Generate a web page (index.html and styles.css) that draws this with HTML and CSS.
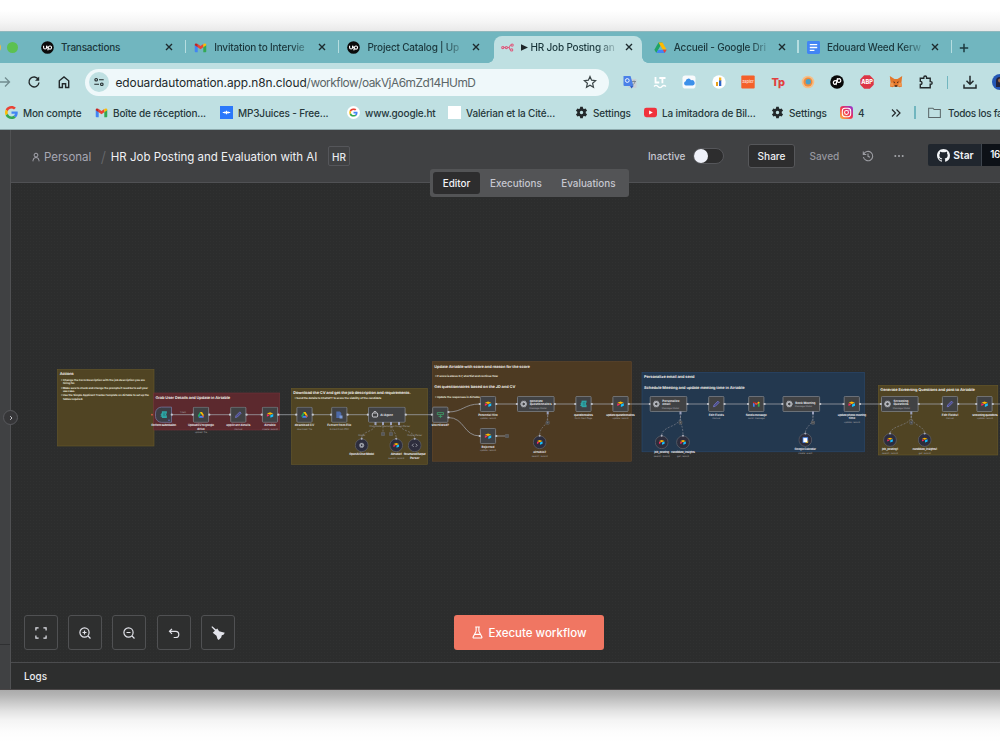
FILE: index.html
```html
<!DOCTYPE html>
<html lang="en">
<head>
    <meta charset="UTF-8">
    <meta name="viewport" content="width=device-width, initial-scale=1.0">
    <title>HR Job Posting and Evaluation with AI</title>
    <link rel="stylesheet" href="styles.css">
</head>
<body>
    <!-- Shared icons -->
    <svg class="sprite" width="0" height="0">
        <symbol id="up" viewBox="0 0 14 14">
            <circle cx="7" cy="7" r="6.8" fill="#0b0b0b"/>
            <path d="M2.8 5v2a1.6 1.6 0 0 0 3.2 0V5c.6 1.7 1.3 2.6 2 3.2M7.3 10.2 8 6.7a1.7 1.7 0 1 1 1.6 2.1c-1 0-1.7-.6-2.3-1.5" fill="none" stroke="#fff" stroke-width="1.2"/>
        </symbol>
        <symbol id="gmail" viewBox="0 0 14 14">
            <path d="M.8 4v7.200c0 .4.300.800.800.800H4V6z" fill="#4285f4"/>
            <path d="M13.200 4v7.200c0 .4-.3.800-.8.800H10V6z" fill="#34a853"/>
            <path d="M4 3.200 7 5.500l3-2.300v3.600L7 9 4 6.800z" fill="#ea4335"/>
            <path d="M10 3.200c1.300-1.100 3.200-.6 3.200.9v.4L10 6.800z" fill="#fbbc04"/>
            <path d="M4 3.200C2.700 2.100.8 2.600.8 4.100v.4L4 6.800z" fill="#c5221f"/>
        </symbol>
        <symbol id="google" viewBox="0 0 48 48">
            <path fill="#EA4335" d="M24 9.500c3.540 0 6.710 1.220 9.210 3.600l6.850-6.850C35.900 2.380 30.470 0 24 0 14.620 0 6.510 5.380 2.560 13.220l7.980 6.190C12.430 13.720 17.740 9.500 24 9.500z"/>
            <path fill="#4285F4" d="M46.980 24.550c0-1.570-.15-3.090-.38-4.550H24v9.020h12.940c-.58 2.960-2.260 5.480-4.780 7.180l7.730 6c4.510-4.180 7.090-10.360 7.090-17.650z"/>
            <path fill="#FBBC05" d="M10.530 28.590c-.48-1.450-.76-2.990-.76-4.590s.27-3.140.76-4.590l-7.980-6.190C.92 16.460 0 20.120 0 24s.92 7.540 2.560 10.780z"/>
            <path fill="#34A853" d="M24 48c6.480 0 11.930-2.130 15.890-5.810l-7.730-6c-2.150 1.450-4.920 2.300-8.160 2.300-6.260 0-11.570-4.220-13.470-9.910l-7.980 6.190C6.510 42.620 14.620 48 24 48z"/>
        </symbol>
        <symbol id="drive" viewBox="0 0 14 14">
            <path d="M4.900 1.500h4.200L4.700 9.200 2.500 13 .4 9.300z" fill="#1fa463"/>
            <path d="M4.900 1.500h4.200l4.500 7.800H9.400z" fill="#ffba00"/>
            <path d="M4.600 9.300h9L11.500 13h-9z" fill="#4285f4"/>
            <path d="m11.500 13-2.100-3.700h4.200z" fill="#ea4335"/>
            <path d="m7 5.600 2.200 3.700H4.800z" fill="currentColor"/>
        </symbol>
        <symbol id="gear" viewBox="0 0 24 24">
            <path fill="#23282a" fill-rule="evenodd" d="M19.800 13.200c.1-.8.1-1.600 0-2.400l2.500-1.900-2.600-4.400-2.900 1.200a8 8 0 0 0-2-1.200L14.400 1.500H9.600l-.4 3a8 8 0 0 0-2 1.200L4.300 4.500 1.700 8.900l2.500 1.900c-.1.8-.1 1.600 0 2.400l-2.500 1.900 2.600 4.400 2.900-1.200a8 8 0 0 0 2 1.200l.4 3h4.800l.4-3a8 8 0 0 0 2-1.200l2.900 1.200 2.600-4.400zM12 15.200a3.200 3.200 0 1 1 0-6.400 3.200 3.200 0 0 1 0 6.400z"/>
        </symbol>
        <symbol id="close" viewBox="0 0 8 8">
            <path d="m1 1 6 6M7 1 1 7" stroke="#1d2b2e" stroke-width="1.4" fill="none"/>
        </symbol>
        <symbol id="airtable" viewBox="0 0 12 12">
            <path d="M1 3.800 6 1.800l5 2-5 2z" fill="#fcb400"/>
            <path d="M6.500 6.600 11.200 4.800v4L6.500 10.600z" fill="#18bfff"/>
            <path d="M.8 4.800 5.500 6.700.8 9z" fill="#f82b60"/>
        </symbol>
        <symbol id="pencil" viewBox="0 0 12 12">
            <path d="m1.500 10.500.8-3 6.200-6.200 2.200 2.200-6.200 6.200z" fill="#4c4e8c" stroke="#8688e6" stroke-width=".9"/>
        </symbol>
        <symbol id="openai" viewBox="0 0 12 12">
            <g fill="none" stroke="#c9ccd3" stroke-width="1">
                <ellipse cx="6" cy="6" rx="4.800" ry="2.500"/>
                <ellipse cx="6" cy="6" rx="4.800" ry="2.500" transform="rotate(60 6 6)"/>
                <ellipse cx="6" cy="6" rx="4.800" ry="2.500" transform="rotate(120 6 6)"/>
            </g>
        </symbol>
        <symbol id="form" viewBox="0 0 12 12">
            <path d="M3 .5h8v3l-1 1v2.500h1v4H3V9H1V7.500h1v-1H1V5h1V3.500H3z" fill="#2fa5a5"/>
            <path d="M5 3.500h4M5 5.500h3M5 7.500h4" stroke="#1f6a70" stroke-width=".8"/>
        </symbol>
        <symbol id="node" viewBox="0 0 20 16">
            <rect x="2.400" y=".4" width="15.200" height="15.200" rx="1" fill="#414244" stroke="#81858b" stroke-width=".8"/>
            <circle cx="1.700" cy="8" r="1.100" fill="#c5c8d0"/>
            <circle cx="18.300" cy="8" r="1.100" fill="#c5c8d0"/>
        </symbol>
        <symbol id="wide" viewBox="0 0 41 16">
            <rect x="2.200" y=".4" width="36.600" height="15.200" rx="1" fill="#414244" stroke="#81858b" stroke-width=".8"/>
            <circle cx="1.500" cy="8" r="1.100" fill="#c5c8d0"/>
            <circle cx="39.500" cy="8" r="1.100" fill="#c5c8d0"/>
        </symbol>
        <symbol id="sub" viewBox="0 0 14 16">
            <circle cx="7" cy="8.700" r="6.400" fill="#2d2d3d" stroke="#6b6e75" stroke-width=".6"/>
            <path d="m7 .9 1.200 1.300L7 3.500 5.800 2.200z" fill="#a9acbb"/>
        </symbol>
        <symbol id="plus" viewBox="0 0 4 4">
            <rect x=".4" y=".4" width="3.200" height="3.200" rx=".5" fill="#38393b" stroke="#85878b" stroke-width=".5"/>
            <path d="M2 1.200v1.600M1.200 2h1.600" stroke="#a0a2a6" stroke-width=".4"/>
        </symbol>
    </svg>

    <div class="window">
        <div class="tabstrip">
            <div class="lights"><i class="yellow"></i><i class="green"></i></div>
            <div class="tab">
                <svg class="fav"><use href="#up"/></svg>
                <span class="tab-title">Transactions</span>
                <svg class="x"><use href="#close"/></svg>
            </div>
            <div class="tab">
                <svg class="fav"><use href="#gmail"/></svg>
                <span class="tab-title fade">Invitation to Intervie</span>
                <svg class="x"><use href="#close"/></svg>
            </div>
            <div class="tab no-sep">
                <svg class="fav"><use href="#up"/></svg>
                <span class="tab-title fade">Project Catalog | Up</span>
                <svg class="x"><use href="#close"/></svg>
            </div>
            <div class="tab active">
                <svg class="fav" viewBox="0 0 14 14" fill="none" stroke="#e0567a" stroke-width="1.1">
                    <circle cx="1.900" cy="7" r="1.200"/><circle cx="5.800" cy="7" r="1.200"/>
                    <path d="M3 7h1.700M7 7h1.200c1.600 0 .8-2.600 2.500-2.600M8.200 7c1.600 0 .8 2.600 2.300 2.600"/>
                    <circle cx="12" cy="4.400" r="1.200"/><circle cx="11.500" cy="9.600" r="1.200"/>
                </svg>
                <span class="tab-title fade"><svg class="play" viewBox="0 0 7 7"><path d="M0 .3 7 3.500 0 6.700z" fill="#1d2528"/></svg>HR Job Posting an</span>
                <svg class="x"><use href="#close"/></svg>
            </div>
            <div class="tab">
                <svg class="fav"><use href="#drive"/></svg>
                <span class="tab-title fade">Accueil - Google Dri</span>
                <svg class="x"><use href="#close"/></svg>
            </div>
            <div class="tab">
                <svg class="fav" viewBox="0 0 14 14"><rect width="14" height="14" rx="1.500" fill="#4285f4"/><path d="M3 4h8M3 7h8M3 10h5" stroke="#fff" stroke-width="1.4"/></svg>
                <span class="tab-title fade">Edouard Weed Kerw</span>
                <svg class="x"><use href="#close"/></svg>
            </div>
            <svg class="new-tab" viewBox="0 0 10 10"><path d="M5 .8v8.400M.8 5h8.400" stroke="#1d3b40" stroke-width="1.5"/></svg>
        </div>

        <div class="toolbar">
            <svg class="ic forward" viewBox="0 0 14 14"><path d="M0 7h12M8 2.500 12.500 7 8 11.500" fill="none" stroke="#728c90" stroke-width="1.3"/></svg>
            <svg class="ic reload" viewBox="0 0 14 14"><path d="M11.400 4.500A5 5 0 1 0 12 7.500" fill="none" stroke="#22292b" stroke-width="1.4"/><path d="M12.200 1.500v4.200H8z" fill="#22292b"/></svg>
            <svg class="ic home" viewBox="0 0 14 14"><path d="M2.300 5.800 7 2l4.700 3.800v6.700H8.600V8.700H5.400v3.800H2.300z" fill="none" stroke="#22292b" stroke-width="1.4"/></svg>
            <div class="address">
                <span class="site-info">
                    <svg viewBox="0 0 14 14" fill="none" stroke="#22292b" stroke-width="1.3"><circle cx="3.700" cy="4.400" r="1.500"/><path d="M7 4.400h5.500M1.500 9.600H7"/><circle cx="10.300" cy="9.600" r="1.500"/></svg>
                </span>
                <span class="url"><b>edouardautomation.app.n8n.cloud</b>/workflow/oakVjA6mZd14HUmD</span>
                <svg class="star" viewBox="0 0 14 14"><path d="m7 1.500 1.600 3.700 4 .4-3 2.700.9 4L7 10.200l-3.500 2.100.9-4-3-2.700 4-.4z" fill="none" stroke="#3c4648" stroke-width="1.2"/></svg>
            </div>
            <div class="extensions">
                <svg viewBox="0 0 14 14"><rect x="5.500" y="4" width="8" height="9" rx=".8" fill="#c9d0d6"/><path d="M.5 1h7l3 10H1.500a1 1 0 0 1-1-1z" fill="#4a80e8"/><path d="m7 11 3.500 0L8.500 13.600z" fill="#2d5fc4"/><circle cx="4.300" cy="5.500" r="1.900" fill="none" stroke="#fff" stroke-width=".9"/><path d="M9 6.500h4M11 5.500v1m1 0c-.5 2-1.500 3-2.500 3.500" stroke="#65727c" stroke-width=".7" fill="none"/></svg>
                <svg viewBox="0 0 14 14" fill="none" stroke="#fff" stroke-width="1.8"><path d="M2.500 2v5.500h3.800M6.300 3h6.200M9.400 3v5.300"/><path d="M1 11.500c1.500-1.600 2.500-1.600 4 0s2.500 1.600 4 0 2.500-1.300 4 0" stroke-width="1.3"/></svg>
                <svg viewBox="0 0 14 14"><rect x=".5" y=".5" width="13" height="13" rx="2.800" fill="#f8fafc"/><path d="M4 10.500a2.200 2.200 0 0 1-.3-4.300 2.800 2.800 0 0 1 5.300-1 2.500 2.500 0 0 1 1.700 5.300z" fill="#3c90ea"/></svg>
                <svg viewBox="0 0 14 14"><circle cx="7" cy="7" r="6.700" fill="#fff"/><path d="M4 7h2v4H4z" fill="#e8a21c"/><path d="M7 5h2.300v6H7z" fill="#2c64c8"/><path d="M7 2.500h2.300v3H7z" fill="#f5b21e"/></svg>
                <svg viewBox="0 0 14 14"><rect x=".3" y=".5" width="13.400" height="13" rx="1" fill="#f4602a"/><text class="zap" x="7" y="8" text-anchor="middle">zapier</text></svg>
                <svg viewBox="0 0 14 14"><text class="tp" x="7" y="11.300" text-anchor="middle">Tp</text></svg>
                <svg viewBox="0 0 14 14"><circle cx="7" cy="7" r="6.300" fill="#f5c08a"/><circle cx="7" cy="7" r="4.500" fill="#f08c3c"/><circle cx="7.300" cy="6.800" r="2.700" fill="#4a9fc8"/></svg>
                <svg viewBox="0 0 14 14"><circle cx="7" cy="7" r="6.800" fill="#080808"/><path d="M7.500 3.200 6 10M6.800 6.200a2 2 0 1 0-2.300 3.200c1.200 0 2-.8 2.300-2.200l.5-1.700c.3-1.200 1-1.800 2-1.800a1.900 1.900 0 1 1-2 2.900" fill="none" stroke="#fff" stroke-width="1.2"/></svg>
                <svg viewBox="0 0 14 14"><path d="M4.200.3h5.600l3.900 3.900v5.600l-3.900 3.900H4.200L.3 9.800V4.200z" fill="#dc3545"/><text class="abp" x="7" y="9.200" text-anchor="middle">ABP</text></svg>
                <svg viewBox="0 0 14 14"><path d="M.8 1 5.500 4h3L13.200 1l-.8 7 .6 3.500-2.500.8-1.500-.8H5l-1.500.8-2.500-.8L1.600 8z" fill="#e2762b"/><path d="M1.600 8 4 7.500 5 11l-4 .5zM12.400 8 10 7.500 9 11l4 .5z" fill="#f0964e"/><path d="m4 6.500 2 .5-.5 1.200zM10 6.500 8 7l.5 1.200zM5.700 10.300h2.600v1.400H5.700z" fill="#38241a"/></svg>
                <svg viewBox="0 0 14 14"><path d="M1.300 3.200h3.500V2.400a1.400 1.400 0 0 1 2.800 0v.8h3.600v3.400h.6a1.300 1.300 0 0 1 0 2.700h-.6v3.500H1.300V9.500c2.300-.1 2.300-3 0-3.100z" fill="none" stroke="#23292b" stroke-width="1.4"/></svg>
            </div>
            <i class="bar"></i>
            <svg class="ic download" viewBox="0 0 14 14"><path d="M7 .8v8M3.500 5.700 7 9.200l3.500-3.500M1 9.500V13h12V9.500" fill="none" stroke="#23292b" stroke-width="1.5"/></svg>
            <svg class="avatar" viewBox="0 0 16 16"><circle cx="8" cy="8" r="8" fill="#2457b5"/><path d="M4 13V7a4 4 0 0 1 8 0v6z" fill="#23233c"/><circle cx="8" cy="6.500" r="2" fill="#9c6b4a"/></svg>
        </div>

        <div class="bookmarks">
            <div class="bm"><svg><use href="#google"/></svg>Mon compte</div>
            <div class="bm"><svg><use href="#gmail"/></svg>Boîte de réception...</div>
            <div class="bm"><svg viewBox="0 0 14 14"><rect width="14" height="14" fill="#2b78fa"/><path d="M3 7h8M5.300 6v2M7 5.200v3.600M8.700 6v2" stroke="#fff" stroke-width="1.3"/></svg>MP3Juices - Free...</div>
            <div class="bm"><svg viewBox="-12 -12 72 72"><circle cx="24" cy="24" r="36" fill="#fff"/><use href="#google" width="48" height="48"/></svg>www.google.ht</div>
            <div class="bm"><svg viewBox="0 0 14 14"><rect width="14" height="14" fill="#fff"/></svg>Valérian et la Cité...</div>
            <div class="bm"><svg><use href="#gear"/></svg>Settings</div>
            <div class="bm"><svg viewBox="0 0 14 14"><rect y="2" width="14" height="10" rx="2.500" fill="#f0323c"/><path d="m5.500 4.800 4 2.200-4 2.200z" fill="#fff"/></svg>La imitadora de Bil...</div>
            <div class="bm"><svg><use href="#gear"/></svg>Settings</div>
            <div class="bm">
                <svg viewBox="0 0 14 14">
                    <defs><linearGradient id="insta" x1="0" y1="1" x2="1" y2="0"><stop offset="0" stop-color="#fdbf3b"/><stop offset=".5" stop-color="#f0324f"/><stop offset="1" stop-color="#8a35e0"/></linearGradient></defs>
                    <rect width="14" height="14" rx="3.500" fill="url(#insta)"/><rect x="2.500" y="2.500" width="9" height="9" rx="2.800" fill="none" stroke="#fff" stroke-width="1.1"/><circle cx="7" cy="7" r="2.100" fill="none" stroke="#fff" stroke-width="1.1"/><circle cx="9.700" cy="4.300" r=".6" fill="#fff"/>
                </svg>4
            </div>
            <svg class="more" viewBox="0 0 10 10"><path d="m1 1.500 3.500 3.500L1 8.500M5.500 1.500 9 5 5.500 8.500" fill="none" stroke="#23292b" stroke-width="1.2"/></svg>
            <i class="bar"></i>
            <div class="bm folder"><svg viewBox="0 0 14 14"><path d="M.7 2.300h4.600l1.300 1.500h6.700v8.700H.7z" fill="none" stroke="#5b6769" stroke-width="1.1"/></svg>Todos los fa</div>
        </div>

        <div class="app">
            <aside class="sidebar"><button class="expand"><svg viewBox="0 0 8 8"><path d="m3.200 2.200 1.800 1.800-1.800 1.800" fill="none" stroke="#d5d6da" stroke-width=".9"/></svg></button></aside>
            <main class="main">
                <header class="header">
                    <svg class="person" viewBox="0 0 10 10" fill="none" stroke="#a7a7b0" stroke-width="1"><circle cx="5" cy="3.100" r="1.900"/><path d="M2 9.300v-.8a3 3 0 0 1 6 0v.8"/></svg>
                    <span class="project">Personal</span>
                    <span class="slash">/</span>
                    <span class="title">HR Job Posting and Evaluation with AI</span>
                    <span class="tag">HR</span>
                    <span class="inactive">Inactive</span>
                    <span class="toggle"></span>
                    <button class="share">Share</button>
                    <span class="saved">Saved</span>
                    <svg class="history" viewBox="0 0 12 12" fill="none" stroke="#9c9da3" stroke-width="1.1"><path d="M1.700 4.200A4.700 4.700 0 1 1 1.400 7M1.300 1.500v3h3M6 3.500v2.800l2 1"/></svg>
                    <svg class="dots" viewBox="0 0 10 4" fill="#a6a7ac"><circle cx="1.300" cy="2" r="1"/><circle cx="5" cy="2" r="1"/><circle cx="8.700" cy="2" r="1"/></svg>
                    <div class="github">
                        <span class="gh-star"><svg viewBox="0 0 16 16"><path fill="#f3f5f8" d="M8 0C3.580 0 0 3.580 0 8c0 3.540 2.290 6.530 5.470 7.590.4.070.55-.17.55-.38 0-.19-.01-.82-.01-1.490-2.010.37-2.530-.49-2.690-.94-.09-.23-.48-.94-.82-1.130-.28-.15-.68-.52-.01-.53.63-.01 1.080.58 1.230.82.72 1.210 1.870.87 2.330.66.07-.52.28-.87.51-1.070-1.780-.2-3.640-.89-3.640-3.950 0-.87.31-1.590.82-2.150-.08-.2-.36-1.020.08-2.120 0 0 .67-.21 2.200.82.64-.18 1.320-.27 2-.27s1.360.09 2 .27c1.530-1.040 2.200-.82 2.200-.82.44 1.100.16 1.920.08 2.120.51.56.82 1.270.82 2.150 0 3.070-1.870 3.750-3.650 3.950.29.25.54.73.54 1.480 0 1.070-.01 1.930-.01 2.200 0 .21.15.46.55.38A8.010 8.010 0 0 0 16 8c0-4.420-3.580-8-8-8z"/></svg>Star</span>
                        <span class="gh-count">16</span>
                    </div>
                    <nav class="switcher"><span class="on">Editor</span><span>Executions</span><span>Evaluations</span></nav>
                </header>

                <section class="canvas">
                    <svg class="flow" viewBox="11 183 989 479">
                        <!-- sticky notes -->
                        <rect x="57.500" y="369.500" width="96.500" height="76.500" fill="#504423" stroke="#6a5a2a" stroke-width=".6"/>
                        <rect x="153.700" y="393" width="126" height="37" fill="#5c292e" stroke="#74343a" stroke-width=".6"/>
                        <rect x="291.500" y="388.300" width="136" height="76" fill="#504423" stroke="#6a5a2a" stroke-width=".6"/>
                        <rect x="432.300" y="361.700" width="199" height="99.500" fill="#4d3a22" stroke="#67492a" stroke-width=".6"/>
                        <rect x="642" y="372.300" width="222.500" height="79.500" fill="#23384f" stroke="#2a4a70" stroke-width=".6"/>
                        <rect x="878.300" y="385.300" width="119.500" height="69.700" fill="#504423" stroke="#6a5a2a" stroke-width=".6"/>

                        <!-- sticky note texts -->
                        <g class="h">
                            <text x="59.700" y="375" textLength="14">Actions</text>
                            <text x="155.500" y="399.300" textLength="74.500">Grab User Details and Update in Airtable</text>
                            <text x="293.300" y="394" textLength="117.500">Download the CV and get the job description and requirements.</text>
                            <text x="434.300" y="367.500" textLength="95.500">Update Airtable with score and reason for the score</text>
                            <text x="434.300" y="387.700" textLength="81">Get questionnaires based on the JD and CV</text>
                            <text x="644" y="377.800" textLength="50.500">Personalize email and send</text>
                            <text x="644" y="389" textLength="100.500">Schedule Meeting and update meeting time in Airtable</text>
                            <text x="880.300" y="391" textLength="94.500">Generate Screening Questions and post to Airtable</text>
                        </g>
                        <g class="p">
                            <text x="61" y="380.600" textLength="84">• Change the Form Description with the job description you are</text>
                            <text x="63" y="384" textLength="12">hiring for.</text>
                            <text x="61" y="388.500" textLength="87">• Make sure to check and change the prompts if need be to suit your</text>
                            <text x="63" y="391.900" textLength="12">use case.</text>
                            <text x="61" y="396.400" textLength="88">• Use the Simple Applicant Tracker template on Airtable to set up the</text>
                            <text x="63" y="399.800" textLength="20">tables required.</text>
                            <text x="294.500" y="399.300" textLength="87">• Send the details to ChatGPT to score the viability of the candidate</text>
                            <text x="435" y="377.300" textLength="63">• If score is above 0.7, shortlist and continue flow</text>
                            <text x="435" y="397.800" textLength="45">• Update the responses in Airtable</text>
                        </g>

                        <!-- connections -->
                        <g class="edge">
                            <path d="M172 414.700h260"/>
                            <path d="M448 412c15 0 16-8 32-8M448 417.500c17 0 15 18.500 32 18.500M496 436h9M496 404h152M687 404h194M918 404h82"/>
                        </g>
                        <g class="edge dashed">
                            <path d="M375.500 423c0 10-13.800 7-13.800 15.500M383 423v11M391 423v11M391.500 423c0 9 4.700 8 4.700 15.500M399 423c0 9 15.700 7 15.700 15.500M547.700 412v9M547.700 415c0 13-8 10-8 20.500M680.500 412v9M680.500 416c0 12-18.800 9-18.800 20M680.500 416c0 10 2.500 9 2.500 20M813 412v9M813 416c0 10-7.700 9-7.700 18M911.300 412v9M911.300 416c0 10-21.300 9-21.300 18M911.300 416c0 10 13.400 9 13.400 18"/>
                        </g>

                        <!-- nodes -->
                        <path d="M171.500 407.100h-10a6 6 0 0 0-6 6v3.200a6 6 0 0 0 6 6h10z" fill="#3d3d45" stroke="#75749a" stroke-width=".8"/>
                        <circle cx="171.800" cy="414.700" r="1.100" fill="#c5c8d0"/>
                        <circle cx="152" cy="414.700" r=".9" fill="#d85a48"/>
                        <use href="#form" x="160" y="411" width="7.500" height="7.500"/>
                        <circle cx="169" cy="420.300" r=".8" fill="#6366c8"/>
                        <use href="#node" x="191" y="406.700" width="20" height="16"/><use href="#drive" x="197.500" y="411.200" width="7" height="7"/>
                        <use href="#node" x="228.300" y="406.700" width="20" height="16"/><use href="#pencil" x="234.500" y="411" width="7.500" height="7.500"/>
                        <use href="#node" x="260" y="406.700" width="20" height="16"/><use href="#airtable" x="266.300" y="411" width="7.500" height="7.500"/>
                        <use href="#node" x="294.500" y="406.700" width="20" height="16"/><use href="#drive" x="301" y="411.200" width="7" height="7"/>
                        <use href="#node" x="329.300" y="406.700" width="20" height="16"/>
                        <path d="M336.300 411.500h3.500l1.500 1.500v5h-5z" fill="#4d6aa8"/><path d="M339.500 415.500h3v3h-3z" fill="#7c9ad6"/>
                        <use href="#wide" x="366.300" y="406.700" width="41" height="16"/>
                        <rect x="372.300" y="413" width="5.400" height="4" rx="1" fill="none" stroke="#dcdde2" stroke-width=".9"/><path d="M373.500 412.500c0-1.500 3-1.500 3 0" fill="none" stroke="#dcdde2" stroke-width=".7"/>
                        <rect x="432.700" y="407.100" width="15.200" height="15.200" rx="1" fill="#414244" stroke="#81858b" stroke-width=".8"/>
                        <path d="M437.300 412.600h6.200v2h-6.200zM440.400 414.600v3.500M438.500 416.500h3.800" fill="none" stroke="#3f9764" stroke-width=".9"/>
                        <g fill="#c5c8d0"><circle cx="431.800" cy="414.700" r="1.100"/><circle cx="448.500" cy="412" r="1.100"/><circle cx="448.500" cy="417.500" r="1.100"/></g>
                        <use href="#node" x="478" y="396" width="20" height="16"/><use href="#airtable" x="484.300" y="400.300" width="7.500" height="7.500"/>
                        <use href="#node" x="478" y="428" width="20" height="16"/><use href="#airtable" x="484.300" y="432.300" width="7.500" height="7.500"/>
                        <use href="#plus" x="505" y="434" width="4" height="4"/>
                        <use href="#wide" x="515.300" y="396" width="41" height="16"/><use href="#openai" x="519.700" y="400" width="8" height="8"/>
                        <use href="#node" x="573.500" y="396" width="20" height="16"/><use href="#form" x="579.700" y="400.300" width="7.500" height="7.500"/>
                        <use href="#node" x="610.500" y="396" width="20" height="16"/><use href="#airtable" x="616.800" y="400.300" width="7.500" height="7.500"/>
                        <use href="#wide" x="648" y="396" width="41" height="16"/><use href="#openai" x="652.300" y="400" width="8" height="8"/>
                        <use href="#node" x="706.300" y="396" width="20" height="16"/><use href="#pencil" x="712.500" y="400.300" width="7.500" height="7.500"/>
                        <use href="#node" x="746.300" y="396" width="20" height="16"/><use href="#gmail" x="752.500" y="400.300" width="7.500" height="7.500"/>
                        <use href="#wide" x="780.800" y="396" width="41" height="16"/><use href="#openai" x="785.300" y="400" width="8" height="8"/>
                        <use href="#node" x="841.800" y="396" width="20" height="16"/><use href="#airtable" x="848" y="400.300" width="7.500" height="7.500"/>
                        <use href="#wide" x="879.300" y="396" width="41" height="16"/><use href="#openai" x="883.500" y="400" width="8" height="8"/>
                        <use href="#node" x="940" y="396" width="20" height="16"/><use href="#pencil" x="946.200" y="400.300" width="7.500" height="7.500"/>
                        <use href="#node" x="974.500" y="396" width="20" height="16"/><use href="#airtable" x="980.800" y="400.300" width="7.500" height="7.500"/>

                        <!-- sub nodes -->
                        <path class="port" d="M374.500 422h2v3h-2zM382 422h2v3h-2zM390 422h2v3h-2zM398 422h2v3h-2zM546.700 411.500h2v3h-2zM679.500 411.500h2v3h-2zM812 411.500h2v3h-2zM910.300 411.500h2v3h-2z"/>
                        <use href="#plus" x="381" y="432" width="4" height="4"/><use href="#plus" x="389" y="432" width="4" height="4"/>
                        <use href="#plus" x="545.700" y="420.700" width="4" height="4"/><use href="#plus" x="678.500" y="420.700" width="4" height="4"/>
                        <use href="#plus" x="811" y="420.700" width="4" height="4"/><use href="#plus" x="909.300" y="420.700" width="4" height="4"/>
                        <use href="#sub" x="354.700" y="436.600" width="14" height="16"/><use href="#openai" x="358.700" y="442.300" width="6" height="6"/>
                        <use href="#sub" x="389.200" y="436.600" width="14" height="16"/><use href="#airtable" x="393" y="442" width="6.500" height="6.500"/>
                        <use href="#sub" x="407.700" y="436.600" width="14" height="16"/><path d="m413.700 443.700-1.500 1.600 1.500 1.600M415.700 443.700l1.500 1.600-1.500 1.600" fill="none" stroke="#d5d6dd" stroke-width=".6"/>
                        <use href="#sub" x="532.700" y="433.600" width="14" height="16"/><use href="#airtable" x="536.500" y="439" width="6.500" height="6.500"/>
                        <use href="#sub" x="654.700" y="433.600" width="14" height="16"/><use href="#airtable" x="658.500" y="439" width="6.500" height="6.500"/>
                        <use href="#sub" x="676" y="433.600" width="14" height="16"/><use href="#airtable" x="679.800" y="439" width="6.500" height="6.500"/>
                        <use href="#sub" x="798.300" y="431.300" width="14" height="16"/>
                        <rect x="803" y="437.700" width="4.700" height="4.700" fill="#fff" stroke="#4285f4" stroke-width=".8"/><path d="M805.500 442.500h2.200v-2" stroke="#fbbc04" stroke-width=".8" fill="none"/>
                        <use href="#sub" x="883" y="431.300" width="14" height="16"/><use href="#airtable" x="886.800" y="436.700" width="6.500" height="6.500"/>
                        <use href="#sub" x="917.700" y="431.300" width="14" height="16"/><use href="#airtable" x="921.500" y="436.700" width="6.500" height="6.500"/>

                        <!-- node labels -->
                        <g class="n">
                            <text x="163.700" y="426.300" textLength="25">On form submission</text>
                            <text x="201" y="426.300" textLength="26">Upload CV to google</text><text x="201" y="429.700">drive</text>
                            <text x="238.300" y="426.300">applicant details</text>
                            <text x="270" y="426.300">Airtable</text>
                            <text x="304.500" y="426.300">download CV</text>
                            <text x="339.300" y="426.300">Extract from File</text>
                            <text x="386.500" y="415.800">AI Agent</text>
                            <text x="440.300" y="426.300">shortlisted?</text>
                            <text x="361.700" y="455.300" textLength="25">OpenAI Chat Model</text>
                            <text x="396.200" y="455.300" textLength="11">Airtable1</text>
                            <text x="414.700" y="455.300" textLength="22">Structured Output</text><text x="414.700" y="458.700">Parser</text>
                            <text x="488" y="415.700">Potential Hire</text>
                            <text x="488" y="447.500">Rejected</text>
                            <text x="583.500" y="415.700" textLength="19">questionnaires</text>
                            <text x="620.500" y="415.700" textLength="28.500">update questionnaires</text>
                            <text x="539.700" y="453">airtable2</text>
                            <text x="716.300" y="415.700">Edit Fields</text>
                            <text x="756.300" y="415.700" textLength="21">Send a message</text>
                            <text x="852" y="415.700" textLength="28.500">update phone meeting</text><text x="852" y="419.200">time</text>
                            <text x="661.700" y="453" textLength="15">job_posting</text>
                            <text x="683" y="453" textLength="24">candidate_insights</text>
                            <text x="805.300" y="450.300" textLength="21.500">Google Calendar</text>
                            <text x="950" y="415.700">Edit Fields1</text>
                            <text x="985" y="415.700" textLength="25.500">screening questions</text>
                            <text x="890" y="450.300" textLength="16">job_posting1</text>
                            <text x="924.700" y="450.300" textLength="24.500">candidate_insights1</text>
                        </g>
                        <g class="n left">
                            <text x="529.700" y="401.700">generate</text><text x="529.700" y="405">questionnaires</text>
                            <text x="662.300" y="401.700">Personalize</text><text x="662.300" y="405">email</text>
                            <text x="795.300" y="403.500">Book Meeting</text>
                            <text x="893.500" y="401.700">Screening</text><text x="893.500" y="405">Questions</text>
                        </g>
                        <g class="s">
                            <text x="183" y="413.300">1 item</text>
                            <text x="201" y="433.300">upload: file</text>
                            <text x="238.300" y="429.800">manual</text>
                            <text x="270" y="429.800">create: record</text>
                            <text x="304.500" y="429.800">download: file</text>
                            <text x="339.300" y="429.800">Extract From PDF</text>
                            <text x="376" y="427">Chat Model*</text><text x="387" y="427">Memory</text><text x="400" y="427">Tool Output Parser</text>
                            <text x="361.700" y="435.700">Model</text><text x="414.700" y="435.700">Output Parser</text>
                            <text x="396.200" y="459">search: record</text>
                            <text x="488" y="419.200">update: record</text>
                            <text x="488" y="451">update: record</text>
                            <text x="583.500" y="419.200">Form Next Page</text>
                            <text x="620.500" y="419.200">update: record</text>
                            <text x="538" y="408.700">Message Model</text>
                            <text x="670.500" y="408.700">Message Model</text>
                            <text x="803.500" y="407.300">Message Model</text>
                            <text x="901.500" y="408.700">Message Model</text>
                            <text x="539.700" y="456.500">search: record</text>
                            <text x="716.300" y="419.200">manual</text>
                            <text x="756.300" y="419.200">send: message</text>
                            <text x="852" y="422.700">update: record</text>
                            <text x="661.700" y="456.500">search: record</text>
                            <text x="683" y="456.500">get: record</text>
                            <text x="805.300" y="453.800">create: event</text>
                            <text x="950" y="419.200">manual</text>
                            <text x="985" y="419.200">update: record</text>
                            <text x="890" y="453.800">search: record</text>
                            <text x="924.700" y="453.800">get: record</text>
                        </g>
                    </svg>

                    <div class="controls">
                        <button><svg viewBox="0 0 12 12"><path d="M.9 3.600V.9h2.700M8.400.9h2.700v2.700M11.100 8.400v2.700H8.400M3.600 11.100H.9V8.400"/></svg></button>
                        <button><svg viewBox="0 0 12 12"><circle cx="5.500" cy="5.500" r="4.600"/><path d="m9 9 2.500 2.500M5.500 3.500v4M3.500 5.500h4"/></svg></button>
                        <button><svg viewBox="0 0 12 12"><circle cx="5.500" cy="5.500" r="4.600"/><path d="m9 9 2.500 2.500M3.500 5.500h4"/></svg></button>
                        <button><svg viewBox="0 0 12 12"><path d="M4 1.800 1.500 4.300 4 6.800M1.700 4.300h6a3.100 3.100 0 0 1 0 6.200H5.700"/></svg></button>
                        <button><svg class="tidy" viewBox="0 0 14 14"><path d="M1.200.2 5 3.500l1.300-1 1.800 2.800 5.700 1.500-1.300 2-1.700.4-.6 2.300-2.500 2.500-1.200-1-1-3.200L1.700 6.700 3.900 4.800.4 1z"/></svg></button>
                    </div>
                    <button class="execute">
                        <svg viewBox="0 0 12 14"><path d="M3.500 1h5M4.500 1v4.500L1.200 12c-.2.600.1 1 .6 1h8.400c.5 0 .8-.4.600-1L7.500 5.500V1M2.800 9h6.400"/></svg>Execute workflow
                    </button>
                </section>

                <footer class="logs">Logs</footer>
            </main>
        </div>
    </div>
</body>
</html>
```

FILE: styles.css
```css
* {
    margin: 0;
    padding: 0;
    box-sizing: border-box;
}

body {
    width: 1000px;
    height: 750px;
    overflow: hidden;
    font-family: Inter, "Liberation Sans", sans-serif;
    background:
        linear-gradient(#fff 0, #fff 10px, #f5f5f5 22px, #e9e9e9 31px, transparent 31px),
        linear-gradient(#fff 689px, #a9a9a9 689px, #b4b4b4 695px, #cbcbcb 703px, #e2e2e2 711px, #f4f4f4 720px, #fcfcfc 731px, #fff 742px);
    padding-top: 31px;
}

button {
    font-family: inherit;
    border: none;
}

svg {
    display: block;
    flex: none;
}

.sprite {
    position: absolute;
}

.window {
    height: 659px;
    overflow: hidden;
    border-bottom: 1px solid #4a4647;
}

/* Browser tabs */
.tabstrip {
    height: 32px;
    display: flex;
    align-items: center;
    background: #71b6bf;
    border-top: 1px solid #8fb8bd;
}

.lights {
    width: 32px;
    flex: none;
    display: flex;
    gap: 6px;
    margin-left: -10px;
    margin-right: 10px;
}

.lights i {
    width: 11px;
    height: 11px;
    flex: none;
    border-radius: 50%;
}

.yellow {
    background: #e8bb4c;
}

.green {
    background: #5cc151;
}

.tab {
    width: 153.2px;
    height: 27px;
    flex: none;
    display: flex;
    align-items: center;
    padding: 0 12px 5px 9px;
    margin-top: 4px;
    position: relative;
}

.tab::after {
    content: "";
    position: absolute;
    right: -1px;
    top: 4px;
    width: 1.5px;
    height: 13px;
    background: #b5dde0;
}

.tab.no-sep::after {
    display: none;
}

.tab.no-sep::before {
    content: "";
    position: absolute;
    left: 0;
    top: 4px;
    width: 1px;
    height: 13px;
    background: #b5dde0;
}

.tab.active::before {
    content: "";
    position: absolute;
    z-index: 0;
    left: 2px;
    right: 3px;
    top: 0;
    bottom: -1px;
    border-radius: 8px 8px 0 0;
    background: #bfe0e2;
}

/* curved feet of the active tab */
.tab.active::after {
    left: -4px;
    right: -3px;
    top: auto;
    bottom: 0;
    width: auto;
    height: 6px;
    background:
        radial-gradient(circle at 0 0, transparent 5.5px, #bfe0e2 6px) 0 0 / 6px 6px no-repeat,
        radial-gradient(circle at 100% 0, transparent 5.5px, #bfe0e2 6px) 100% 0 / 6px 6px no-repeat;
}

.tab.active > * {
    z-index: 1;
}

.fav {
    width: 13px;
    height: 13px;
    margin-right: 7px;
    color: #71b6bf;
}

.tab-title {
    width: 96px;
    white-space: nowrap;
    font-size: 10px;
    line-height: 14px;
    letter-spacing: -0.2px;
    font-weight: 500;
    color: #1b373c;
}

.fade {
    -webkit-mask-image: linear-gradient(90deg, #000 80%, rgba(0,0,0,0.15) 100%);
    mask-image: linear-gradient(90deg, #000 80%, rgba(0,0,0,0.15) 100%);
}

.play {
    display: inline-block;
    width: 7px;
    height: 7px;
    margin-right: 3px;
}

.x {
    width: 8px;
    height: 8px;
    margin-left: 8.5px;
}

.new-tab {
    width: 10px;
    height: 10px;
    margin-left: 8px;
}

/* Address bar */
.toolbar {
    height: 38px;
    display: flex;
    align-items: center;
    background: #bfe0e2;
}

.ic {
    width: 14px;
    height: 14px;
}

.forward {
    margin-left: -3px;
}

.reload {
    margin-left: 16px;
}

.home {
    margin-left: 16px;
}

.address {
    width: 524px;
    height: 27px;
    flex: none;
    margin-left: 14px;
    border-radius: 14px;
    background: #eff8fa;
    display: flex;
    align-items: center;
    padding: 0 12px 0 4px;
}

.site-info {
    width: 20px;
    height: 20px;
    border-radius: 50%;
    background: #bfe0e2;
    padding: 4px;
}

.site-info svg {
    width: 12px;
    height: 12px;
}

.url {
    flex: 1;
    margin-left: 6.5px;
    font-size: 11.9px;
    letter-spacing: -0.5px;
    color: #5b6668;
}

.url b {
    font-weight: 400;
    letter-spacing: -0.07px;
    color: #22292b;
}

.star {
    width: 14px;
    height: 14px;
}

.extensions {
    flex: none;
    display: flex;
    gap: 15.6px;
    margin-left: 14px;
}

.extensions svg {
    width: 14px;
    height: 14px;
}

.zap {
    font-size: 3.8px;
    font-weight: 700;
    fill: #ffd9c8;
}

.tp {
    font-size: 11px;
    font-weight: 800;
    letter-spacing: -0.5px;
    fill: #e2403e;
}

.abp {
    font-size: 5.6px;
    font-weight: 800;
    fill: #fff;
}

.bar {
    width: 1.5px;
    height: 13px;
    flex: none;
    background: #71b6bf;
}

.toolbar .bar {
    margin-left: 14px;
}

.download {
    margin-left: 15px;
}

.avatar {
    width: 16px;
    height: 16px;
    margin-left: 15px;
}

/* Bookmarks */
.bookmarks {
    height: 29px;
    display: grid;
    grid-template-columns: 90px 125px 127px 101px 127px 69px 127px 69px 51px 23px 14px 72px;
    align-items: center;
    padding: 0 0 5px 5px;
    background: #bfe0e2;
    border-bottom: 1px solid #8eabae;
}

.bm {
    display: flex;
    align-items: center;
    gap: 5px;
    font-size: 10px;
    letter-spacing: -0.15px;
    font-weight: 500;
    color: #26383b;
    white-space: nowrap;
}

.bm svg {
    width: 13px;
    height: 13px;
}

.bm.folder {
    gap: 7px;
    letter-spacing: -0.3px;
}

.more {
    width: 10px;
    height: 10px;
}

/* n8n */
.app {
    display: flex;
    height: 559px;
}

.sidebar {
    width: 11px;
    flex: none;
    background: linear-gradient(#2f3032, #2f3032) 0 514px / 10px 1px no-repeat #404143;
    border-right: 1px solid #505153;
    position: relative;
}

.expand {
    position: absolute;
    z-index: 2;
    left: 3px;
    top: 280px;
    width: 15px;
    height: 15px;
    border-radius: 50%;
    background: #363638;
    border: 1px solid #58595d;
    display: flex;
    align-items: center;
    justify-content: center;
}

.expand svg {
    width: 8px;
    height: 8px;
}

.main {
    width: 989px;
    flex: none;
    display: flex;
    flex-direction: column;
}

.header {
    height: 53px;
    flex: none;
    display: flex;
    align-items: center;
    padding-left: 20px;
    background: #404143;
    border-bottom: 1px solid #505154;
    position: relative;
    color: #c6c7d0;
    font-size: 10.3px;
    font-weight: 500;
}

.person {
    width: 10px;
    height: 10px;
    margin-top: 1px;
}

.project {
    width: 57px;
    margin-left: 3px;
    padding-top: 1px;
    font-size: 11.5px;
    font-weight: 400;
    color: #a7a7b3;
}

.slash {
    width: 10px;
    font-size: 15px;
    font-weight: 300;
    color: #68696d;
}

.title {
    width: 217px;
    padding-top: 1px;
    font-size: 11.5px;
    font-weight: 400;
    color: #f0f1f5;
    white-space: nowrap;
}

.tag {
    width: 22px;
    height: 20px;
    line-height: 20px;
    margin-left: 1px;
    text-align: center;
    border: 1px solid #55565a;
    border-radius: 2px;
    color: #e8e9ee;
    font-size: 10px;
}

.inactive {
    width: 45px;
    margin-left: 298px;
    font-size: 10px;
}

.toggle {
    width: 31px;
    height: 16px;
    border-radius: 8px;
    background: #2d2d2e;
    border: 1px solid #55565a;
}

.toggle::before {
    content: "";
    display: block;
    width: 14px;
    height: 14px;
    border-radius: 50%;
    background: #eff1f9;
}

.share {
    width: 48px;
    height: 24px;
    margin-left: 24px;
    border-radius: 3px;
    border: 1px solid #56575a;
    background: #2d2d2e;
    color: #eeeff3;
    font-size: 10.1px;
    font-weight: 500;
}

.saved {
    width: 53px;
    margin-left: 14px;
    font-size: 10.1px;
    color: #96979f;
}

.history {
    width: 12px;
    height: 12px;
}

.dots {
    width: 10px;
    height: 4px;
    margin-left: 20px;
}

.github {
    display: flex;
    margin-left: 24px;
    height: 22px;
    line-height: 22px;
    font-size: 10.3px;
    font-weight: 600;
    color: #f0f3f6;
    width: 72px;
    margin-top: -2px;
}

.gh-star {
    width: 54px;
    flex: none;
    padding-left: 9px;
    display: flex;
    align-items: center;
    gap: 3px;
    background: #20262e;
    border-right: 1px solid #3d444d;
    border-radius: 2px 0 0 2px;
}

.gh-star svg {
    width: 13px;
    height: 13px;
}

.gh-count {
    flex: 1;
    padding-left: 8px;
    background: #0d1117;
    font-size: 9.8px;
    letter-spacing: -0.4px;
}

.switcher {
    position: absolute;
    z-index: 2;
    left: 419px;
    top: 39px;
    width: 199px;
    height: 28px;
    padding: 3px;
    display: flex;
    background: #535456;
    border-radius: 3px;
    font-size: 9.9px;
    line-height: 22px;
}

.switcher span {
    padding-left: 10px;
    padding-right: 9.5px;
}

.switcher .on {
    width: 47px;
    padding: 0;
    text-align: center;
    background: #2d2d2e;
    border-radius: 3px;
    color: #f2f3f7;
}

.canvas {
    height: 479px;
    flex: none;
    position: relative;
    background-color: #2c2d2d;
    background-image: radial-gradient(circle, #303131 0.5px, transparent 0.9px);
    background-size: 3px 3px;
}

.flow {
    width: 989px;
    height: 479px;
    color: #414244;
    text-rendering: geometricPrecision;
}

.flow .h {
    font-size: 3.9px;
    font-weight: 700;
    fill: #eeece6;
}

.flow .p {
    font-size: 2.8px;
    font-weight: 700;
    fill: #e8e5de;
}

.flow .n {
    font-size: 3px;
    font-weight: 700;
    text-anchor: middle;
    fill: #e2e2e6;
}

.flow .n.left {
    text-anchor: start;
}

.flow .s {
    font-size: 2.3px;
    text-anchor: middle;
    fill: #a0a0a4;
}

.port {
    fill: #9ba1bd;
}

.edge {
    fill: none;
    stroke: #9c9ea4;
    stroke-width: 0.8;
}

.edge.dashed {
    stroke: #888a94;
    stroke-width: 0.6;
    stroke-dasharray: 2 1.3;
}

.controls {
    position: absolute;
    left: 13px;
    bottom: 12px;
    display: flex;
    gap: 10.2px;
}

.controls button {
    width: 34px;
    height: 35px;
    border: 1px solid #505153;
    border-radius: 3px;
    background: #2e2f2f;
    display: flex;
    align-items: center;
    justify-content: center;
}

.controls svg {
    width: 12px;
    height: 12px;
    fill: none;
    stroke: #e2e3ea;
    stroke-width: 1.2;
}

.controls .tidy {
    width: 14px;
    height: 14px;
    fill: #e2e3ea;
    stroke: none;
}

.execute {
    position: absolute;
    left: 443px;
    bottom: 12px;
    width: 150px;
    height: 35px;
    border-radius: 3px;
    background: #f07662;
    color: #fff;
    font-size: 11.5px;
    font-weight: 500;
    display: flex;
    align-items: center;
    justify-content: center;
    gap: 6px;
}

.execute svg {
    width: 11px;
    height: 13px;
    fill: none;
    stroke: #fff;
    stroke-width: 1.2;
}

.logs {
    height: 27px;
    line-height: 27px;
    padding-left: 13px;
    background: #2d2e2e;
    border-top: 1px solid #4b4c4e;
    color: #eeeff2;
    font-size: 9.9px;
    font-weight: 500;
}
```
